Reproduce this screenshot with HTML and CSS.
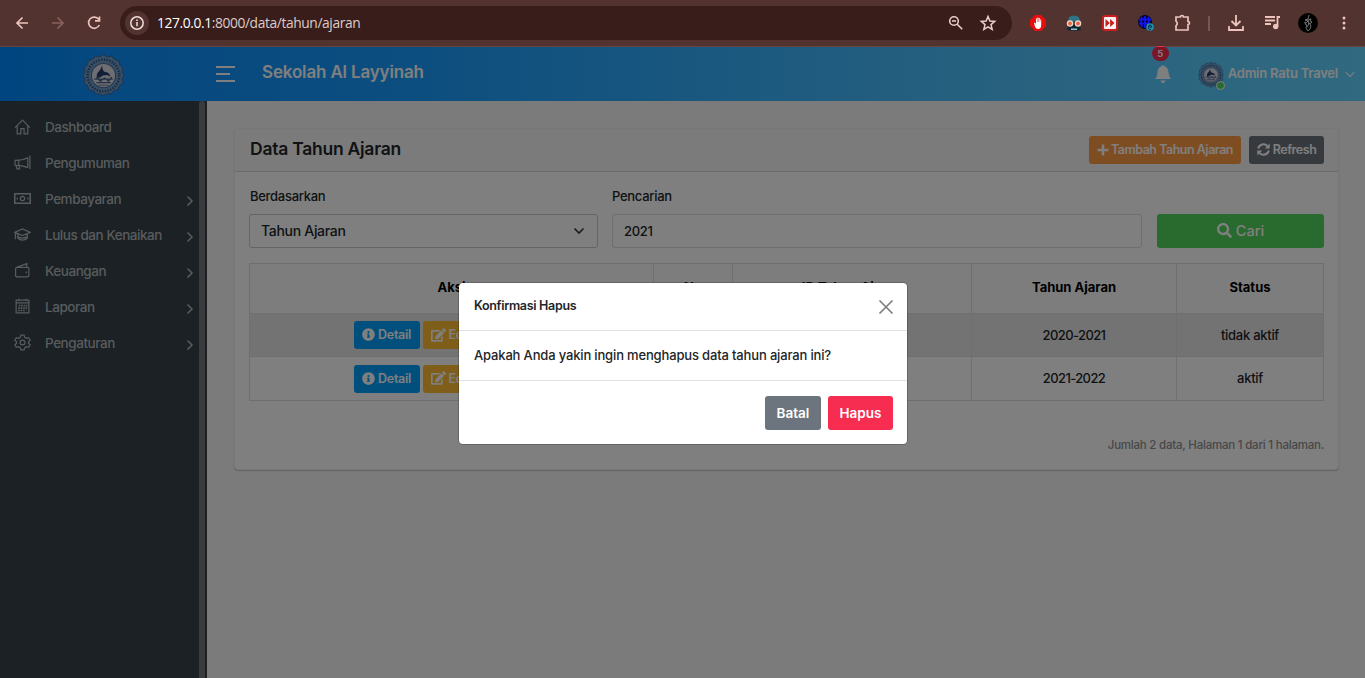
FILE: index.html
```html
<!DOCTYPE html>
<html lang="id">
<head>
<meta charset="utf-8">
<title>Data Tahun Ajaran</title>
<link rel="stylesheet" href="styles.css">
</head>
<body>
<svg width="0" height="0" class="defs">
  <symbol id="info" viewBox="0 0 512 512"><path fill="currentColor" d="M256 8C119.043 8 8 119.083 8 256c0 136.997 111.043 248 248 248s248-111.003 248-248C504 119.083 392.957 8 256 8zm0 110c23.196 0 42 18.804 42 42s-18.804 42-42 42-42-18.804-42-42 18.804-42 42-42zm56 254c0 6.627-5.373 12-12 12h-88c-6.627 0-12-5.373-12-12v-24c0-6.627 5.373-12 12-12h12v-64h-12c-6.627 0-12-5.373-12-12v-24c0-6.627 5.373-12 12-12h64c6.627 0 12 5.373 12 12v100h12c6.627 0 12 5.373 12 12v24z"/></symbol>
  <symbol id="edit" viewBox="0 0 576 512"><path fill="currentColor" d="M402.6 83.2l90.2 90.2c3.8 3.8 3.8 10 0 13.8L274.4 405.6l-92.8 10.3c-12.4 1.4-22.9-9.1-21.5-21.5l10.3-92.8L388.8 83.2c3.8-3.8 10-3.8 13.8 0zm162-22.9l-48.8-48.8c-15.2-15.2-39.9-15.2-55.2 0l-35.4 35.4c-3.8 3.8-3.8 10 0 13.8l90.2 90.2c3.8 3.8 10 3.8 13.8 0l35.4-35.4c15.2-15.3 15.2-40 0-55.2zM384 346.2V448H64V128h229.8c3.2 0 6.2-1.3 8.5-3.5l40-40c7.6-7.6 2.2-20.5-8.5-20.5H48C21.5 64 0 85.5 0 112v352c0 26.5 21.5 48 48 48h352c26.5 0 48-21.5 48-48V306.2c0-10.7-12.9-16-20.5-8.5l-40 40c-2.2 2.3-3.5 5.3-3.5 8.5z"/></symbol>
  <symbol id="search" viewBox="0 0 512 512"><path fill="currentColor" d="M505 442.7L405.3 343c-4.500-4.500-10.600-7-17-7H372c27.600-35.300 44-79.700 44-128C416 93.100 322.900 0 208 0S0 93.100 0 208s93.100 208 208 208c48.300 0 92.700-16.400 128-44v16.300c0 6.400 2.500 12.500 7 17l99.700 99.700c9.400 9.400 24.600 9.400 33.900 0l28.300-28.300c9.400-9.400 9.400-24.600.1-34zM208 336c-70.700 0-128-57.200-128-128 0-70.700 57.200-128 128-128 70.700 0 128 57.200 128 128 0 70.700-57.200 128-128 128z"/></symbol>
  <symbol id="chev" viewBox="0 0 8 12"><path d="M1.500 1.500 6 6l-4.500 4.500" fill="none" stroke="currentColor" stroke-width="1.500"/></symbol>
  <symbol id="crest" viewBox="0 0 42 42">
    <path fill="#6f9dc6" stroke="#3d6da6" stroke-width="1" d="M21 .5q4 3.500 8 1.500 2 4 7 4.500 0 4.500 4 7-2 4 1 7.500-3 3.500-1 7.500-4.500 2-4.500 6.500-5 0-7 4-4-1.500-7.500 2-3.500-3.500-7.500-2-2-4-7-4 0-4.500-4.500-6.500 2-4-1-7.500 3-3.500 1-7.500 4-2.500 4-7Q10.500 6 13 2q4 2 8-1.500z"/>
    <circle cx="21" cy="21" r="15.500" fill="none" stroke="#2b5089" stroke-width="2.300" stroke-dasharray="1.300 1.400"/>
    <circle cx="21" cy="21" r="11.800" fill="#dcdce4" stroke="#4a6ca0"/>
    <path fill="#263c72" d="M14.500 21c0-4 4-4 5-10 .5 4 1 5 2 6 4 1 6 2 6 5l-3-1.500-4 .5-3 2-3 .5z"/>
    <path fill="none" stroke="#4d6290" stroke-width="1.300" d="M12 24.500h18M14 22.500l4 4 4-3 4 3 3-4M14 28h14"/>
    <path stroke="#7183a8" stroke-width="1" d="M16 30.500h10"/>
  </symbol>
</svg>

<header class="browser">
  <svg class="nav-ico" width="100" height="24" viewBox="0 0 100 24" fill="none" stroke="#eec3bd" stroke-width="1.700">
    <path d="M24 12H13M18.500 6.500 13 12l5.500 5.500"/>
    <path stroke="#8a625d" d="M48 12h11M53.500 6.500 59 12l-5.500 5.500"/>
    <path d="M94.700 8.300A5.600 5.600 0 1 0 95.300 14M95.500 5.500v4.300H91"/>
  </svg>
  <div class="omnibox">
    <span class="site-info"><svg width="16" height="16" viewBox="0 0 16 16" fill="none" stroke="#f1dfdc" stroke-width="1.500"><circle cx="8" cy="8" r="6.200"/><path d="M8 7v4.200M8 4.500v1.600"/></svg></span>
    <span class="url"><b>127.0.0.1</b>:8000/data/tahun/ajaran</span>
    <svg class="omni-ico" width="50" height="18" viewBox="0 0 50 18" fill="none" stroke="#e7cfcb" stroke-width="1.600">
      <circle cx="7" cy="7" r="4.300"/><path d="m10.200 10.200 5 5M5 7h4"/>
      <path d="m41 2.500 1.900 4.500 4.800.4-3.700 3.200 1.200 4.800-4.200-2.600-4.200 2.600 1.200-4.800-3.700-3.200 4.800-.4z" stroke-width="1.500"/>
    </svg>
  </div>
  <div class="extensions">
    <svg width="16" height="16" viewBox="0 0 16 16"><path fill="#ea0d0d" d="M5 0h6l5 5v6l-5 5H5l-5-5V5z"/><path fill="#fff" d="M4 8l1-.5 1 1.500V3.500h1V7h.4V2.500h1V7h.4V3h1v4h.4V4.500h1V10q0 4-3.200 4-2 0-2.900-2z"/></svg>
    <svg width="16" height="16" viewBox="0 0 16 16"><path fill="#2d7484" d="M2 6.500Q2 .5 8 .5t6 6z"/><path fill="#12262d" d="M2.500 10h11l1.500 5-3.500.500h-7L1 15z"/><circle cx="4" cy="8.500" r="3.200" fill="#e9dcd2"/><circle cx="12" cy="8.500" r="3.200" fill="#e9dcd2"/><circle cx="4" cy="8.500" r="1.900" fill="#eb623d"/><circle cx="12" cy="8.500" r="1.900" fill="#eb623d"/><path fill="#8fc6d8" d="M5 13.500h6V15H5z"/></svg>
    <svg width="16" height="16" viewBox="0 0 16 16"><rect width="16" height="16" rx="3" fill="#c9201f"/><rect x="2" y="2" width="12" height="12" rx="1" fill="#f8f3f2"/><path fill="#c5201d" d="m3.500 4 4.300 4-4.300 4zm4.600 0 4.400 4-4.400 4z"/></svg>
    <svg width="16" height="16" viewBox="0 0 16 16"><circle cx="7" cy="7" r="7" fill="#05052a"/><path fill="none" stroke="#1414ef" stroke-width="1.800" d="M1 4.500h12M1 8.500h10M7 1v12M4 2q-2 5 0 10M10 2q2 4 0 8"/><circle cx="12" cy="12" r="3.800" fill="#1f93b2"/><path d="M10 12h4M10 12q2-4 4 0M10 13q2 3 3 1" fill="none" stroke="#052a44"/></svg>
    <svg width="18" height="18" viewBox="0 0 18 18"><path fill="none" stroke="#eec3bd" stroke-width="1.700" d="M2 3h4.500a1.500 1.500 0 0 1 3 0H14v4.500a1.500 1.500 0 0 1 0 3V16H2v-4.200q2.500-2.300 0-4.600z"/></svg>
  </div>
  <div class="sep"></div>
  <svg class="right-ico" width="130" height="24" viewBox="0 0 130 24" fill="none" stroke="#eec3bd" stroke-width="1.800">
    <path d="M11 4v10M6.500 10l4.500 4.500 4.500-4.500M4 15v4h14v-4"/>
    <path d="M40 6h10M40 9.500h10M40 13h6M52.500 15.500V6H55"/><circle cx="50.700" cy="15.500" r="1.800" fill="#eec3bd"/>
    <circle cx="83" cy="12" r="10" fill="#000" stroke="none"/><path stroke="#8b8b8b" stroke-width=".8" d="m84 4-1 4-3 1 3 1-3 3 2 1-1 3 2 3 2-2 1-3-1-2 2-2-2-1 1-2-3 1 1 4-2 3m-1-5-2 1m6 0-2 1"/>
    <g fill="#eec3bd" stroke="none"><circle cx="119" cy="7" r="1.500"/><circle cx="119" cy="12" r="1.500"/><circle cx="119" cy="17" r="1.500"/></g>
  </svg>
</header>

<div class="app">
  <div class="topbar">
    <div class="brand"><svg width="43" height="43"><use href="#crest"/></svg></div>
    <svg class="burger" width="20" height="16" viewBox="0 0 20 16" stroke="#fff" stroke-width="2"><path d="M0 1h19M0 8h14M0 15h19"/></svg>
    <span class="school">Sekolah Al Layyinah</span>
    <div class="bell"><span class="badge">5</span><svg width="16" height="18" viewBox="0 0 16 18"><path fill="#fff" d="M7 1q0-1 1-1t1 1q4 1 4.500 6 .3 5 2.500 7H0q2.200-2 2.500-7Q3 2 7 1zM5.500 15.500h5q-.5 2.500-2.500 2.500t-2.500-2.500z"/></svg></div>
    <div class="user"><div class="avatar"><svg width="26" height="26"><use href="#crest"/></svg><i class="online"></i></div><span>Admin Ratu Travel</span><svg width="10" height="7" viewBox="0 0 10 7"><path d="m.7 1 4.300 4.700L9.300 1" fill="none" stroke="#fff" stroke-width="1.100"/></svg></div>
  </div>

  <div class="body">
    <nav class="sidebar">
      <ul class="menu">
        <li><svg class="mi" viewBox="0 0 16 16"><path d="m1 9 7-7 7 7M3 7.500V15h3.500v-5h3v5H13V7.500"/></svg><span>Dashboard</span></li>
        <li><svg class="mi" viewBox="0 0 16 16"><path d="M13 3v10M15 1.500v12.500M13 3.500Q8 6 1 6v4.500q7 0 12 2.500M4.500 6v4.500M2 10.500l.8 3.500h2.500l-.5-3.500"/></svg><span>Pengumuman</span></li>
        <li><svg class="mi" viewBox="0 0 16 16"><path d="M.7 3.500h14.600v9H.7z" stroke-width="1.500"/><circle cx="8" cy="8" r="2"/><path d="M3 7v2M13 7v2"/></svg><span>Pembayaran</span><svg class="chev"><use href="#chev"/></svg></li>
        <li><svg class="mi" viewBox="0 0 16 16"><path d="M.7 6 8 2.700 15.300 6 8 9zM3.500 7.500v4q4.500 3.500 9 0v-4M3.500 10q4.500 3 9 0M1.300 6.500v6"/></svg><span>Lulus dan Kenaikan</span><svg class="chev"><use href="#chev"/></svg></li>
        <li><svg class="mi" viewBox="0 0 16 16"><path d="M3 5h9.500Q14 5 14 6.500v6q0 1.500-1.500 1.500H3q-1.500 0-1.500-1.500v-6Q1.500 5 3 4.800L12 1.500V5M11.500 9v1.500"/></svg><span>Keuangan</span><svg class="chev"><use href="#chev"/></svg></li>
        <li><svg class="mi" viewBox="0 0 16 16"><path d="M2 2h12v12H2zM2 4.500h12M4.500.8v2M11.500.8v2"/><path stroke-width="1.500" stroke-dasharray="1.500 .8" d="M4.500 7.200h8M4 9.500h8.500M4 11.800h7"/></svg><span>Laporan</span><svg class="chev"><use href="#chev"/></svg></li>
        <li><svg class="mi" viewBox="0 0 16 16"><path d="m6.500 1-.6 2.100-1.600.9-2.100-.6L.8 6l1.600 1.300v1.500L.8 10l1.400 2.600 2.100-.6 1.600.9.600 2.100h3l.6-2.100 1.600-.9 2.100.6 1.400-2.600-1.600-1.200V7.300L15.200 6l-1.400-2.600-2.100.6-1.600-.9L9.500 1z"/><circle cx="8" cy="8" r="2.300"/></svg><span>Pengaturan</span><svg class="chev"><use href="#chev"/></svg></li>
      </ul>
      <div class="scroll"></div>
    </nav>

    <main class="content">
      <section class="card">
        <div class="card-head">
          <h1>Data Tahun Ajaran</h1>
          <button class="btn sm orange"><svg width="12" height="12" viewBox="0 0 12 12"><path d="M6 .5v11M.5 6h11" stroke="currentColor" stroke-width="2.500"/></svg><span>Tambah Tahun Ajaran</span></button>
          <button class="btn sm dark"><svg width="13" height="13" viewBox="0 0 13 13"><path d="M1.200 5.500A5.300 5.300 0 0 1 10.500 3.200M11.800 7.500A5.300 5.300 0 0 1 2.500 9.800" fill="none" stroke="currentColor" stroke-width="2"/><path fill="currentColor" d="M12.700.5v5H7.700zM.3 12.500v-5h5z"/></svg><span>Refresh</span></button>
        </div>
        <div class="filters">
          <div class="field by"><label>Berdasarkan</label><div class="control select"><span>Tahun Ajaran</span><svg width="12" height="8" viewBox="0 0 12 8"><path d="M1.500 1.500 6 6l4.500-4.500" fill="none" stroke="#343a40" stroke-width="1.600"/></svg></div></div>
          <div class="field query"><label>Pencarian</label><div class="control"><span>2021</span></div></div>
          <button class="btn green"><svg width="15" height="15"><use href="#search"/></svg><span>Cari</span></button>
        </div>
        <table>
          <colgroup><col class="c1"><col class="c2"><col class="c3"><col class="c4"><col class="c5"></colgroup>
          <thead><tr><th>Aksi</th><th>No</th><th>ID Tahun Ajaran</th><th>Tahun Ajaran</th><th>Status</th></tr></thead>
          <tbody>
            <tr class="odd"><td><div class="actions"><button class="btn sm blue"><svg width="13" height="13"><use href="#info"/></svg><span>Detail</span></button><button class="btn sm yellow"><svg width="15" height="14"><use href="#edit"/></svg><span>Edit</span></button><button class="btn sm red"><span>Hapus</span></button></div></td><td></td><td></td><td>2020-2021</td><td>tidak aktif</td></tr>
            <tr><td><div class="actions"><button class="btn sm blue"><svg width="13" height="13"><use href="#info"/></svg><span>Detail</span></button><button class="btn sm yellow"><svg width="15" height="14"><use href="#edit"/></svg><span>Edit</span></button><button class="btn sm red"><span>Hapus</span></button></div></td><td></td><td></td><td>2021-2022</td><td>aktif</td></tr>
          </tbody>
        </table>
        <p class="summary">Jumlah 2 data, Halaman 1 dari 1 halaman.</p>
      </section>
    </main>
  </div>

  <div class="backdrop">
    <div class="modal">
      <div class="modal-head"><h2>Konfirmasi Hapus</h2><svg width="16" height="16" viewBox="0 0 16 16"><path d="m1.500 1.500 13 13m0-13-13 13" stroke="#7f7f7f" stroke-width="1.700"/></svg></div>
      <div class="modal-body">Apakah Anda yakin ingin menghapus data tahun ajaran ini?</div>
      <div class="modal-foot"><button class="btn grey">Batal</button><button class="btn danger">Hapus</button></div>
    </div>
  </div>
</div>
</body>
</html>
```
FILE: styles.css
```css
* { box-sizing: border-box; }
body { margin: 0; height: 678px; overflow: hidden; display: flex; flex-direction: column; font-family: Inter, "Liberation Sans", sans-serif; font-size: 13.5px; font-weight: 500; color: #212529; }
.defs { position: absolute; }
h1, h2, p, ul { margin: 0; padding: 0; }
svg { flex: none; display: block; }
button { font: inherit; }

.browser { height: 47px; flex: none; background: #52332f; border-bottom: 1px solid #654541; display: flex; align-items: center; }
.nav-ico { margin-left: 4px; }
.omnibox { margin-left: 16px; width: 892px; height: 34px; border-radius: 17px; background: #381d1a; display: flex; align-items: center; padding: 0 15px 0 5px; }
.site-info { width: 24px; height: 24px; border-radius: 50%; background: #52332f; display: flex; align-items: center; justify-content: center; }
.url { font: 13.8px "Open Sans", "Noto Sans", sans-serif; color: #dfcbc8; margin: -1px 0 0 8px; flex: 1; letter-spacing: -.39px; }
.url b { font-weight: 400; color: #fff; }
.extensions { display: flex; align-items: center; gap: 20px; margin-left: 18px; }
.sep { width: 2px; height: 15px; background: #795651; margin-left: 16px; }
.right-ico { margin-left: 15px; }

.app { position: relative; flex: 1; display: flex; flex-direction: column; min-height: 0; }
.topbar { height: 54px; flex: none; background: linear-gradient(90deg, #008aff, #0c91ff 7%, #189cff 30%, #4abffe 68%, #62d4ff 100%); display: flex; align-items: center; color: #fff; padding-right: 10px; }
.brand { width: 207px; display: flex; justify-content: center; padding: 2px 1px 0 0; }
.burger { margin-left: 9px; }
.school { margin: -5px auto 0 26px; font-size: 17px; font-weight: 600; letter-spacing: -.16px; }
.bell { position: relative; margin-right: 27px; }
.badge { position: absolute; left: -3px; top: -19px; width: 17px; height: 15px; border-radius: 8px; background: #f62d51; font-size: 9.5px; font-weight: 600; text-align: center; line-height: 15px; }
.user { display: flex; align-items: center; font-size: 13px; font-weight: 600; letter-spacing: -.22px; }
.user > span { margin: -3px 7px 0 4px; }
.avatar { position: relative; padding-top: 1px; }
.online { position: absolute; right: -1px; bottom: -2px; width: 9px; height: 9px; border-radius: 50%; background: #53d45c; border: 1px solid #fff; }

.body { flex: 1; display: flex; min-height: 0; }
.sidebar { width: 207px; background: #364248; display: flex; }
.menu { list-style: none; flex: 1; padding-top: 8px; }
.menu li { height: 36px; display: flex; align-items: center; padding: 0 6px 0 14px; color: #b0b8bd; }
.menu span { margin-left: 14px; flex: 1; white-space: nowrap; letter-spacing: -.45px; }
.mi { width: 17px; height: 17px; margin-top: -1px; fill: none; stroke: currentColor; stroke-width: 1.150; }
.chev { width: 8px; height: 12px; margin: 3px -1px 0 1px; }
.scroll { width: 6px; margin-right: 2px; background: #737779; border-radius: 3px 3px 0 0; }

.content { flex: 1; background: #f6f6f6; padding: 27px 26px 0 27px; }
.card { width: 1105px; height: 342px; background: #fff; border: 1px solid #efefef; border-radius: 4px; box-shadow: 0 1px 1px rgba(0,0,0,.2); }
.card-head { height: 43px; background: #f7f7f7; border-bottom: 1px solid #d7d7d7; display: flex; align-items: center; padding: 0 14px 0 15px; gap: 8px; }
h1 { font-size: 17.5px; font-weight: 600; margin-right: auto; margin-top: -3px; letter-spacing: -.25px; }
.btn { border: 0; border-radius: 3px; color: #fff; display: flex; align-items: center; justify-content: center; padding: 0 0 1px; font-weight: 600; height: 34px; white-space: nowrap; }
.sm { height: 28px; font-size: 12.5px; font-weight: 600; gap: 3px; letter-spacing: -.28px; }
.orange { background: #ff9a44; width: 152px; gap: 2px; letter-spacing: -.5px; }
.dark { background: #6c757d; width: 75px; letter-spacing: -.45px; }
.filters { display: flex; align-items: flex-end; padding: 16px 14px 15px 14px; }
.field label { display: block; height: 27px; line-height: 18px; font-size: 13px; letter-spacing: -.28px; }
.by { width: 349px; margin-right: 14px; }
.by label { padding-left: 1px; }
.query { width: 530px; margin-right: 15px; }
.control { height: 34px; border: 1px solid #dcdcdc; border-radius: 3px; padding: 0 12px 1px 11px; display: flex; align-items: center; justify-content: space-between; font-size: 13px; letter-spacing: -.3px; }
.select { border-color: #c9c9c9; font-size: 14px; }
.green { background: #53d45f; width: 167px; gap: 4px; font-size: 14.5px; font-weight: 500; }
.filters { padding-top: 15px; }
table { width: 1075px; margin-left: 14px; border-collapse: collapse; table-layout: fixed; }
.c1 { width: 404px; } .c2 { width: 79px; } .c3 { width: 239px; } .c4 { width: 205px; } .c5 { width: 147px; }
th, td { border: 1px solid #dedede; padding: 0; text-align: center; }
th { height: 50px; font-weight: 700; font-size: 13px; color: #000; padding-bottom: 4px; background: #fafafa; }
td { height: 44px; font-size: 13px; padding-bottom: 1px; letter-spacing: -.28px; }
td:nth-child(4) { letter-spacing: -.6px; }
td:first-child { padding-bottom: 0; }
.odd td { background: #e7e7e7; height: 43px; }
.actions { display: flex; justify-content: center; gap: 3px; padding-right: 2px; }
.blue { background: #009efb; width: 66px; }
.yellow { background: #ffbc34; width: 56px; }
.red { background: #f62d51; width: 66px; }
.summary { text-align: right; padding: 36px 14px 0 0; font-size: 11.5px; line-height: 16px; color: #8f8f8f; letter-spacing: -.22px; }

.backdrop { position: absolute; inset: 0; background: rgba(0,0,0,.5); display: flex; justify-content: center; align-items: flex-start; padding: 236px 0 0 1px; }
.modal { width: 448px; height: 161px; background: #fff; border-radius: 4px; box-shadow: 0 0 0 1px rgba(0,0,0,.2); }
.modal-head { height: 48px; border-bottom: 1px solid #dee2e6; display: flex; justify-content: space-between; align-items: center; padding: 0 13px 0 15px; }
h2 { font-size: 12.5px; font-weight: 600; margin-top: -3px; letter-spacing: -.32px; }
.modal-body { height: 50px; border-bottom: 1px solid #dee2e6; padding: 15px; line-height: 18px; font-size: 13px; white-space: nowrap; letter-spacing: -.16px; }
.modal-foot { display: flex; justify-content: flex-end; gap: 7px; padding: 15px 14px; }
.grey { background: #6c757d; width: 56px; }
.danger { background: #f62d51; width: 65px; }
```
